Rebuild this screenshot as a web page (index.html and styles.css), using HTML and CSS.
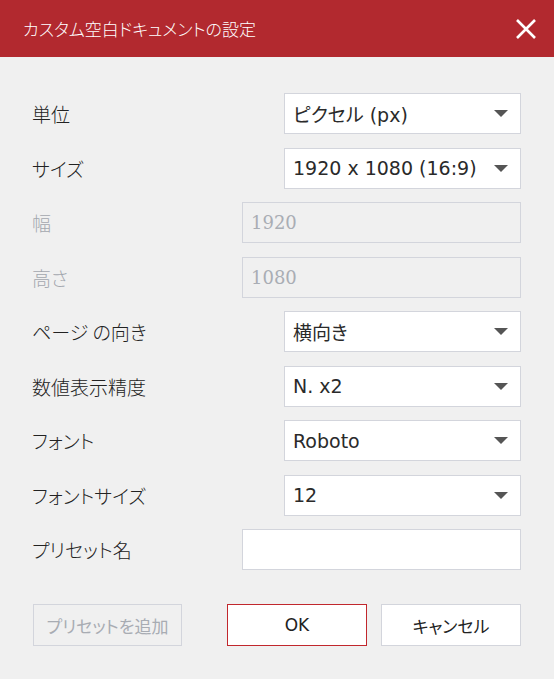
FILE: index.html
```html
<!DOCTYPE html>
<html lang="ja">
<head>
<meta charset="utf-8">
<link rel="stylesheet" href="styles.css">
</head>
<body>
<div class="dialog">
  <header class="titlebar">
    <span class="title">カスタム空白ドキュメントの設定</span>
    <svg class="close" width="20" height="20" viewBox="0 0 20 20"><path d="M1 1 L19 19 M19 1 L1 19" stroke="#fff" stroke-width="2.6" fill="none"/></svg>
  </header>
  <main class="form">
    <div class="row">
      <span class="label">単位</span>
      <div class="select"><span>ピクセル (px)</span><i class="arrow"></i></div>
    </div>
    <div class="row">
      <span class="label">サイズ</span>
      <div class="select"><span>1920 x 1080 (16:9)</span><i class="arrow"></i></div>
    </div>
    <div class="row">
      <span class="label disabled">幅</span>
      <div class="input is-disabled">1920</div>
    </div>
    <div class="row">
      <span class="label disabled">高さ</span>
      <div class="input is-disabled">1080</div>
    </div>
    <div class="row">
      <span class="label">ページ の向き</span>
      <div class="select"><span>横向き</span><i class="arrow"></i></div>
    </div>
    <div class="row">
      <span class="label">数値表示精度</span>
      <div class="select"><span>N. x2</span><i class="arrow"></i></div>
    </div>
    <div class="row">
      <span class="label">フォント</span>
      <div class="select"><span>Roboto</span><i class="arrow"></i></div>
    </div>
    <div class="row">
      <span class="label">フォントサイズ</span>
      <div class="select"><span>12</span><i class="arrow"></i></div>
    </div>
    <div class="row">
      <span class="label">プリセット名</span>
      <div class="input"></div>
    </div>
    <div class="buttons">
      <button class="btn btn-disabled">プリセットを追加</button>
      <div class="btn-group">
        <button class="btn btn-ok">OK</button>
        <button class="btn">キャンセル</button>
      </div>
    </div>
  </main>
</div>
</body>
</html>
```

FILE: styles.css
```css
html, body {
  margin: 0;
  padding: 0;
  background: #f0f0f0;
}
body {
  font-family: "DejaVu Sans", "Noto Sans CJK JP", sans-serif;
  font-feature-settings: "palt";
  color: #222;
  font-size: 18px;
}
.dialog {
  width: 554px;
  height: 679px;
  background: #f0f0f0;
}
.titlebar {
  height: 57px;
  background: #b2292f;
  display: flex;
  align-items: center;
  justify-content: space-between;
  padding: 0 18px 0 23px;
  box-sizing: border-box;
}
.title {
  color: #fff;
  font-size: 17px;
  font-weight: 300;
  font-family: "Noto Sans CJK JP", sans-serif;
}
.close {
  display: block;
}
.form {
  padding: 36px 33px 0 32px;
  display: flex;
  flex-direction: column;
  gap: 13.5px;
}
.row {
  display: flex;
  align-items: center;
  justify-content: space-between;
  height: 41px;
}
.label {
  font-family: "Noto Sans CJK JP", sans-serif;
  font-size: 19px;
  font-weight: 300;
  color: #222;
}
.label.disabled {
  color: #a3a7ae;
}
.select {
  width: 237px;
  height: 41px;
  box-sizing: border-box;
  background: #fff;
  border: 1px solid #d3d5dc;
  display: flex;
  align-items: center;
  justify-content: space-between;
  padding: 0 12px 0 8px;
  font-size: 19px;
  font-weight: 400;
  color: #2a2a2a;
}
.arrow {
  width: 0;
  height: 0;
  border-left: 7px solid transparent;
  border-right: 7px solid transparent;
  border-top: 7px solid #555;
}
.input {
  width: 279px;
  height: 41px;
  box-sizing: border-box;
  background: #fff;
  border: 1px solid #d3d5dc;
  display: flex;
  align-items: center;
  padding: 0 8px;
}
.input.is-disabled {
  background: #f0f0f0;
  color: #a9adb4;
  font-family: "DejaVu Serif", serif;
  font-size: 18px;
}
.buttons {
  margin-top: 20.5px;
  display: flex;
  justify-content: space-between;
  margin-left: 1px;
}
.btn-group {
  display: flex;
  gap: 14px;
}
.btn {
  width: 140px;
  height: 42px;
  box-sizing: border-box;
  background: #fff;
  border: 1px solid #d3d5dc;
  font-family: "DejaVu Sans", "Noto Sans CJK JP", sans-serif;
  font-feature-settings: "palt";
  font-size: 17px;
  font-weight: 400;
  color: #222;
  padding: 0;
}
.btn-disabled {
  width: 149px;
  background: #f0f0f0;
  color: #a8acb3;
}
.btn-ok {
  border-color: #c1272d;
}
```
